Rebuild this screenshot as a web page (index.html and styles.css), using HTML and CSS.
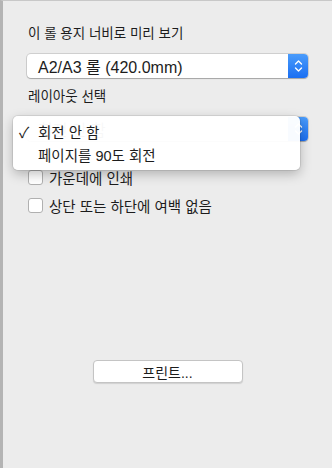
FILE: index.html
```html
<!DOCTYPE html>
<html lang="ko">
<head>
  <meta charset="UTF-8">
  <meta name="viewport" content="width=device-width, initial-scale=1.0">
  <title>프린트</title>
  <link rel="stylesheet" href="styles.css">
</head>
<body>
  <div class="panel">
    <div class="label">이 롤 용지 너비로 미리 보기</div>
    <div class="popup">
      <span class="popup-text">A2/A3 롤 (420.0mm)</span>
      <span class="stepper">
        <svg width="9" height="14" viewBox="0 0 9 14">
          <path d="M1.5 5 L4.5 2 L7.5 5 M1.5 9 L4.5 12 L7.5 9" fill="none" stroke="#fff" stroke-width="1.4" stroke-linecap="round" stroke-linejoin="round"/>
        </svg>
      </span>
    </div>

    <div class="label">레이아웃 선택</div>
    <div class="popup">
      <span class="popup-text">회전 안 함</span>
      <span class="stepper">
        <svg width="9" height="14" viewBox="0 0 9 14">
          <path d="M1.5 5 L4.5 2 L7.5 5 M1.5 9 L4.5 12 L7.5 9" fill="none" stroke="#fff" stroke-width="1.4" stroke-linecap="round" stroke-linejoin="round"/>
        </svg>
      </span>
    </div>

    <div class="options">
      <label class="check"><span class="box"></span>가운데에 인쇄</label>
      <label class="check"><span class="box"></span>상단 또는 하단에 여백 없음</label>
    </div>

    <div class="actions">
      <button class="print-btn">프린트...</button>
    </div>

    <!-- open menu of the layout popup -->
    <ul class="menu">
      <li class="menu-item selected"><span class="tick">✓</span>회전 안 함</li>
      <li class="menu-item"><span class="tick"></span>페이지를 90도 회전</li>
    </ul>
  </div>
</body>
</html>
```

FILE: styles.css
```css
body {
  margin: 0;
  padding: 0;
  background: #ececec;
  font-family: "Liberation Sans", "Noto Sans CJK KR", sans-serif;
  font-size: 13.5px;
  color: #1c1c1c;
}

.panel {
  position: relative;
  box-sizing: border-box;
  height: 468px;
  border-left: 3px solid #b4b4b4;
  border-top: 1px solid #c8c8c8;
  padding: 25px 24px 0 24px;
}

.label {
  height: 16px;
  line-height: 16px;
  padding-left: 1px;
  margin-bottom: 12px;
}

.popup {
  display: flex;
  align-items: center;
  height: 24px;
  background: #fff;
  border-radius: 4px;
  box-shadow: 0 0 0 1px rgba(0, 0, 0, 0.12), 0 1px 1px rgba(0, 0, 0, 0.2);
  margin-bottom: 11px;
}

.popup-text {
  flex: 1;
  padding-left: 11px;
  font-size: 16px;
}

.stepper {
  width: 20px;
  height: 24px;
  display: flex;
  align-items: center;
  justify-content: center;
  background: linear-gradient(to bottom, #4a9cfb, #1b6ff2);
  border-radius: 0 4px 4px 0;
}

.options {
  display: flex;
  flex-direction: column;
  gap: 12px;
  padding-top: 17px;
  padding-left: 1px;
  font-size: 14.5px;
}

.check {
  display: flex;
  align-items: center;
  height: 16px;
  gap: 6px;
}

.box {
  width: 13px;
  height: 13px;
  background: #fff;
  border: 1px solid #b0b0b0;
  border-radius: 3px;
}

.actions {
  display: flex;
  justify-content: center;
  margin-top: 147px;
}

.print-btn {
  width: 150px;
  height: 23px;
  background: #fff;
  border: 1px solid #c4c4c4;
  border-radius: 4px;
  box-shadow: 0 1px 1px rgba(0, 0, 0, 0.12);
  font-family: "Liberation Sans", "Noto Sans CJK KR", sans-serif;
  font-size: 14px;
  color: #1c1c1c;
  padding: 0;
}

.menu {
  position: absolute;
  left: 10px;
  top: 115px;
  width: 287px;
  margin: 0;
  padding: 4px 0;
  list-style: none;
  background: rgba(255, 255, 255, 0.97);
  border-radius: 5px;
  box-shadow: 0 0 0 1px rgba(0, 0, 0, 0.08), 0 4px 12px rgba(0, 0, 0, 0.25);
  font-size: 14.5px;
}

.menu-item {
  display: flex;
  align-items: center;
  height: 23px;
  padding-left: 6px;
}

.tick {
  width: 19px;
  font-size: 15px;
}
```
